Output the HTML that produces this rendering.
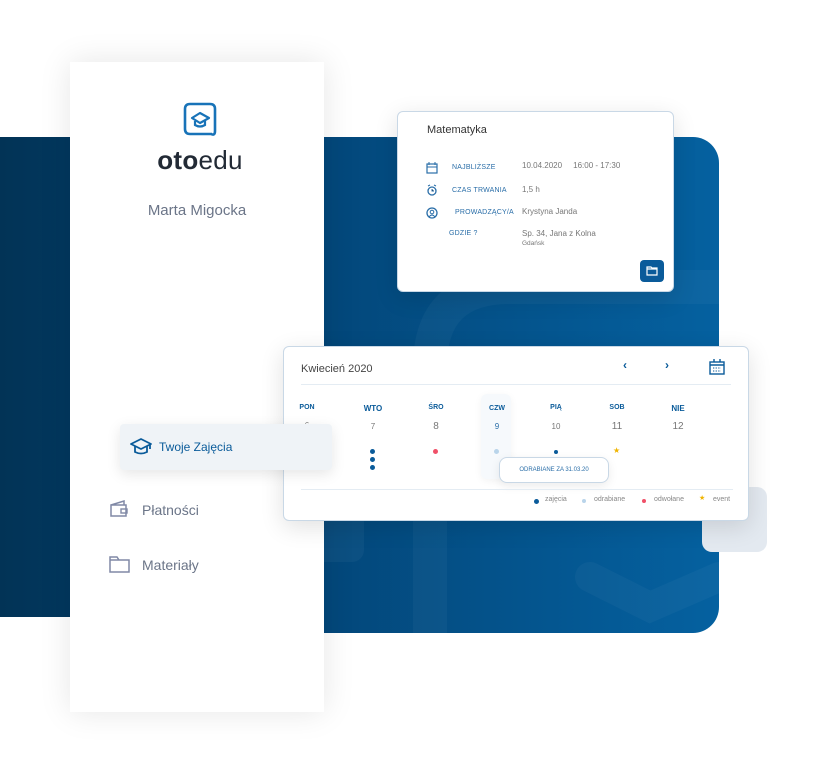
<!DOCTYPE html>
<html><head><meta charset="utf-8"><style>
*{margin:0;padding:0;box-sizing:border-box}
body{width:821px;height:770px;background:#fff;position:relative;overflow:hidden;font-family:"Liberation Sans","DejaVu Sans",sans-serif}
.abs{position:absolute}
.panel{left:0;top:137px;width:719px;height:496px;border-radius:0 26px 26px 0;background:linear-gradient(90deg,#023356 0%,#03477a 45%,#0561a0 100%);overflow:hidden}
.strip{left:0;top:617px;width:70px;height:20px;background:#fff}
.side{left:70px;top:62px;width:254px;height:650px;background:#fff;box-shadow:0 0 30px rgba(0,0,0,.10)}
.card{background:#fff;border:1px solid #c9d8e6;border-radius:6px;box-shadow:0 6px 24px rgba(0,0,0,.12)}
.lab{color:#2a6ea8;font-size:7px;letter-spacing:.2px}
.val{color:#777;font-size:8px}
.dn{color:#0a5b9a;font-size:8px;font-weight:bold;text-align:center;width:30px}
.num{color:#777;font-size:10px;text-align:center;width:30px}
.dot{width:5px;height:5px;border-radius:50%}
</style></head><body>
<div class="abs panel">
 <svg class="abs" style="left:0;top:0" width="719" height="496">
  <path d="M430 496 V230 Q430 150 510 150 H719" fill="none" stroke="rgba(255,255,255,0.035)" stroke-width="34"/>
  <path d="M590 440 L650 470 L719 440" fill="none" stroke="rgba(255,255,255,0.035)" stroke-width="30" stroke-linecap="round"/>
  <rect x="300" y="330" width="64" height="95" rx="12" fill="rgba(255,255,255,0.04)"/>
 </svg>
</div>
<div class="abs strip"></div>
<div class="abs" style="left:702px;top:487px;width:65px;height:65px;border-radius:10px;background:#e3e9f0"></div>

<div class="abs side">
 <svg class="abs" style="left:112px;top:39px" width="38" height="38" viewBox="0 0 38 38">
  <path d="M30 33 H8 Q3 33 3 28 V8 Q3 3 8 3 H28 Q33 3 33 8 V30 Q33 35 29 33" fill="none" stroke="#1873b8" stroke-width="2.6"/>
  <path d="M10 17 L18 12 L27 17 L18 22 Z" fill="none" stroke="#1873b8" stroke-width="2.2" stroke-linejoin="round"/>
  <path d="M13 20 V24 Q18 27 23 24 V20" fill="none" stroke="#1873b8" stroke-width="2.2"/>
 </svg>
 <div class="abs" style="left:3px;width:254px;top:83px;text-align:center;font-size:26px;color:#222a35;letter-spacing:.3px"><b>oto</b>edu</div>
 <div class="abs" style="left:0;width:254px;top:140px;text-align:center;font-size:15px;color:#6b7588">Marta Migocka</div>
 <svg class="abs" style="left:39px;top:438px" width="22" height="18" viewBox="0 0 22 18"><path d="M2 5 H17 V16 H2 Z M2 5 L15 1 V5" fill="none" stroke="#8089a6" stroke-width="1.5"/><rect x="12" y="9" width="6" height="4" fill="none" stroke="#8089a6" stroke-width="1.4"/></svg>
 <div class="abs" style="left:72px;top:440px;font-size:14px;color:#6b7588">Płatności</div>
 <svg class="abs" style="left:39px;top:494px" width="22" height="18" viewBox="0 0 22 18"><path d="M1 1 H8 L10 4 H20 V16 H1 Z M1 4 H10" fill="none" stroke="#8089a6" stroke-width="1.5"/></svg>
 <div class="abs" style="left:72px;top:495px;font-size:14px;color:#6b7588">Materiały</div>
</div>

<div class="abs card" style="left:397px;top:111px;width:277px;height:181px">
 <div class="abs" style="left:29px;top:12px;font-size:11px;color:#333">Matematyka</div>
 <svg class="abs" style="left:28px;top:50px" width="12" height="12" viewBox="0 0 12 12"><rect x="1" y="2" width="10" height="9" fill="none" stroke="#2a6ea8" stroke-width="1.2"/><path d="M1 5 H11 M3 0 V3 M9 0 V3" stroke="#2a6ea8"/></svg>
 <svg class="abs" style="left:28px;top:72px" width="12" height="12" viewBox="0 0 12 12"><circle cx="6" cy="7" r="4" fill="none" stroke="#2a6ea8" stroke-width="1.3"/><path d="M6 5 V7 H8 M2 2 L4 1 M10 2 L8 1" stroke="#2a6ea8"/></svg>
 <svg class="abs" style="left:28px;top:95px" width="12" height="12" viewBox="0 0 12 12"><circle cx="6" cy="6" r="5" fill="none" stroke="#2a6ea8" stroke-width="1.3"/><circle cx="6" cy="5" r="1.8" fill="none" stroke="#2a6ea8"/><path d="M3 10 Q6 6 9 10" fill="none" stroke="#2a6ea8"/></svg>
 <div class="abs lab" style="left:54px;top:52px">NAJBLIŻSZE</div>
 <div class="abs lab" style="left:54px;top:75px">CZAS TRWANIA</div>
 <div class="abs lab" style="left:57px;top:97px">PROWADZĄCY/A</div>
 <div class="abs lab" style="left:51px;top:118px">GDZIE ?</div>
 <div class="abs val" style="left:124px;top:49px">10.04.2020 &nbsp;&nbsp;&nbsp; 16:00 - 17:30</div>
 <div class="abs val" style="left:124px;top:73px">1,5 h</div>
 <div class="abs val" style="left:124px;top:95px">Krystyna Janda</div>
 <div class="abs val" style="left:124px;top:117px">Sp. 34, Jana z Kolna</div>
 <div class="abs val" style="left:124px;top:128px;font-size:6.5px">Gdańsk</div>
 <div class="abs" style="left:242px;top:148px;width:24px;height:22px;background:#0a5b9a;border-radius:4px"><svg class="abs" style="left:6px;top:6px" width="12" height="10" viewBox="0 0 12 10"><path d="M1 1 H5 L6 2 H11 V9 H1 Z M1 3 H11" fill="none" stroke="#fff" stroke-width="1.2"/></svg></div>
</div>

<div class="abs card" style="left:283px;top:346px;width:466px;height:175px">
 <div class="abs" style="left:17px;top:16px;font-size:11px;color:#444">Kwiecień 2020</div>
 <div class="abs" style="left:339px;top:11px;font-size:12px;color:#0a5b9a;font-weight:bold">‹</div>
 <div class="abs" style="left:381px;top:11px;font-size:12px;color:#0a5b9a;font-weight:bold">›</div>
 <svg class="abs" style="left:425px;top:12px" width="16" height="16" viewBox="0 0 16 16"><rect x="1" y="3" width="14" height="12" fill="none" stroke="#0a5b9a" stroke-width="1.4"/><path d="M1 6 H15 M5 0 V3 M11 0 V3" stroke="#0a5b9a" stroke-width="1.4"/><path d="M4 9 H12 M4 12 H12" stroke="#0a5b9a" stroke-dasharray="1.3 1.3"/></svg>
 <div class="abs" style="left:17px;top:37px;width:430px;height:1px;background:#e4ecf3"></div>
 <div class="abs" style="left:197px;top:47px;width:30px;height:85px;border-radius:6px;background:#f6f9fc;box-shadow:0 2px 8px rgba(0,0,0,.05)"></div>
 <div class="abs dn" style="left:8px;top:57px;font-size:7px">PON</div>
 <div class="abs dn" style="left:74px;top:57px">WTO</div>
 <div class="abs dn" style="left:137px;top:57px;font-size:7px">ŚRO</div>
 <div class="abs dn" style="left:198px;top:58px;font-size:7px">CZW</div>
 <div class="abs dn" style="left:257px;top:57px;font-size:7px">PIĄ</div>
 <div class="abs dn" style="left:318px;top:57px;font-size:7px">SOB</div>
 <div class="abs dn" style="left:379px;top:57px">NIE</div>
 <div class="abs num" style="left:8px;top:74px;font-size:8px">6</div>
 <div class="abs num" style="left:74px;top:75px;font-size:8px">7</div>
 <div class="abs num" style="left:137px;top:74px">8</div>
 <div class="abs num" style="left:198px;top:75px;font-size:8px;color:#2a6ea8">9</div>
 <div class="abs num" style="left:257px;top:75px;font-size:8px">10</div>
 <div class="abs num" style="left:318px;top:74px">11</div>
 <div class="abs num" style="left:379px;top:74px">12</div>
 <div class="abs dot" style="left:86px;top:102px;background:#0a5b9a"></div>
 <div class="abs dot" style="left:86px;top:110px;background:#0a5b9a"></div>
 <div class="abs dot" style="left:86px;top:118px;background:#0a5b9a"></div>
 <div class="abs dot" style="left:149px;top:102px;background:#f05068"></div>
 <div class="abs dot" style="left:210px;top:102px;background:#b9d4ea"></div>
 <div class="abs dot" style="left:270px;top:103px;width:4px;height:4px;background:#0a5b9a"></div>
 <div class="abs" style="left:329px;top:99px;font-size:8px;color:#f0b400">★</div>
 <div class="abs" style="left:215px;top:110px;width:110px;height:26px;border:1px solid #c9d8e6;border-radius:8px;background:#fff;box-shadow:0 3px 10px rgba(0,0,0,.08);font-size:6px;color:#2a6ea8;text-align:center;line-height:24px">ODRABIANE ZA 31.03.20</div>
 <div class="abs" style="left:17px;top:142px;width:432px;height:1px;background:#e4ecf3"></div>
 <div class="abs dot" style="left:250px;top:152px;background:#0a5b9a"></div><div class="abs" style="left:261px;top:149px;font-size:7px;color:#888">zajęcia</div>
 <div class="abs dot" style="left:298px;top:152px;width:4px;height:4px;background:#b9d4ea"></div><div class="abs" style="left:310px;top:149px;font-size:7px;color:#888">odrabiane</div>
 <div class="abs dot" style="left:358px;top:152px;width:4px;height:4px;background:#f05068"></div><div class="abs" style="left:370px;top:149px;font-size:7px;color:#888">odwołane</div>
 <div class="abs" style="left:415px;top:147px;font-size:7px;color:#f0b400">★</div><div class="abs" style="left:429px;top:149px;font-size:7px;color:#888">event</div>
</div>

<div class="abs" style="left:120px;top:424px;width:212px;height:46px;background:#eff3f7;border-radius:4px;box-shadow:0 4px 14px rgba(0,0,0,.10)">
 <svg class="abs" style="left:10px;top:14px" width="22" height="18" viewBox="0 0 22 18"><path d="M1 6 L11 1 L21 6 L11 11 Z" fill="none" stroke="#0a5b9a" stroke-width="1.8" stroke-linejoin="round"/><path d="M5 8 V14 Q11 17 17 14 V8 M20 6 V11" fill="none" stroke="#0a5b9a" stroke-width="1.8"/></svg>
 <div class="abs" style="left:39px;top:16px;font-size:12px;color:#0a5b9a">Twoje Zajęcia</div>
</div>
</body></html>
